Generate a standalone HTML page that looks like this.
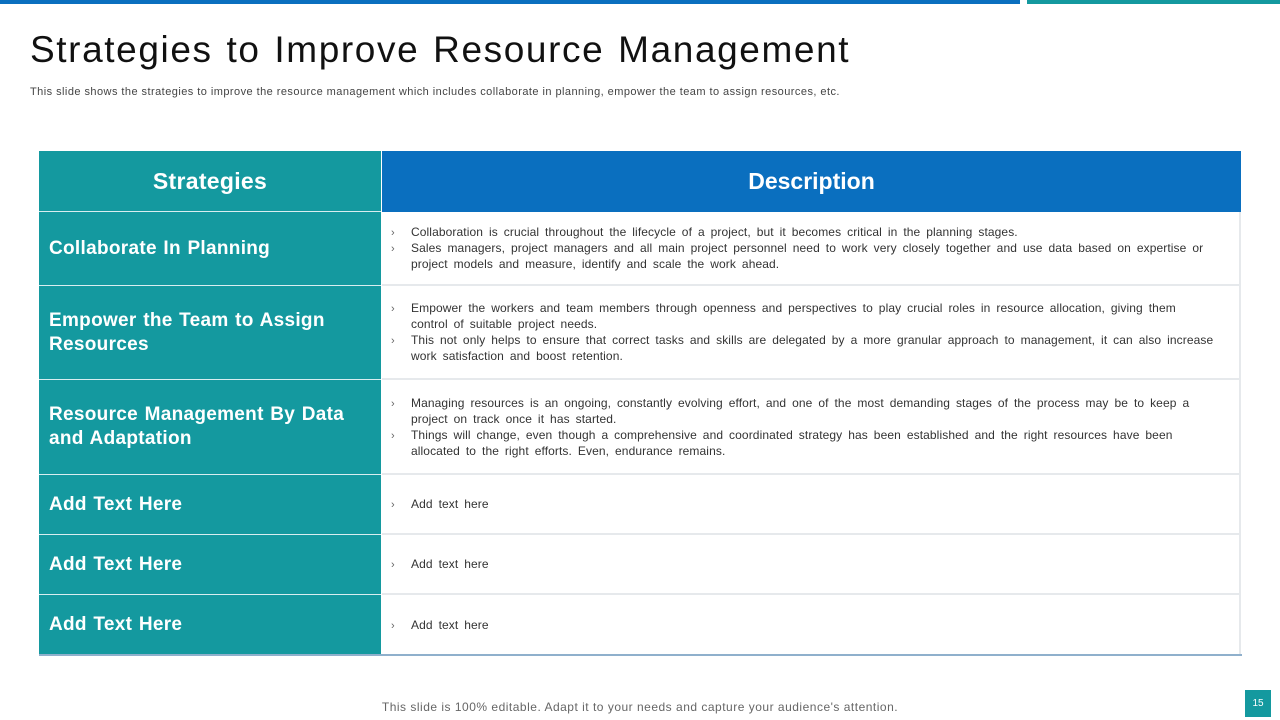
<!DOCTYPE html>
<html><head><meta charset="utf-8"><style>
*{margin:0;padding:0;box-sizing:border-box}
body{width:1280px;height:720px;background:#fff;position:relative;overflow:hidden;font-family:"Liberation Sans",sans-serif}
.a{position:absolute}
.l{position:absolute;left:39px;width:342px;background:#14999f;color:#fff;font-weight:bold;font-size:19px;letter-spacing:0.3px;word-spacing:1px;padding-left:10px;padding-right:20px;display:flex;align-items:center;line-height:24px;border-bottom:1px solid #d8eef0}
.r{position:absolute;left:382px;width:859px;border-bottom:2px solid #e6e9ec;border-right:2px solid #e6e9ec;font-size:12px;color:#333;padding-left:29px;padding-right:22px;display:flex;flex-direction:column;justify-content:center;line-height:16px;word-spacing:2.5px;letter-spacing:0.1px}
.r p{position:relative}
.r p:before{content:"›";position:absolute;left:-20px;color:#666;font-size:11px;top:1px}
</style></head><body>
<div class="a" style="left:0;top:0;width:1020px;height:4px;background:#0a6fbf"></div>
<div class="a" style="left:1027px;top:0;width:253px;height:4px;background:#14999f"></div>
<div class="a" style="left:30px;top:29px;font-size:37px;color:#111;letter-spacing:1.6px;word-spacing:2px">Strategies to Improve Resource Management</div>
<div class="a" style="left:30px;top:86px;font-size:11px;color:#444;letter-spacing:0.45px">This slide shows the strategies to improve the resource management which includes collaborate in planning, empower the team to assign resources, etc.</div>

<div class="l" style="top:151px;height:61px;justify-content:center;padding:0;font-size:23px">Strategies</div>
<div class="a" style="left:382px;top:151px;width:859px;height:61px;background:#0a6fbf;color:#fff;font-weight:bold;font-size:23px;display:flex;align-items:center;justify-content:center">Description</div>

<div class="l" style="top:212px;height:74px">Collaborate In Planning</div>
<div class="r" style="top:212px;height:74px"><p>Collaboration is crucial throughout the lifecycle of a project, but it becomes critical in the planning stages.</p><p>Sales managers, project managers and all main project personnel need to work very closely together and use data based on expertise or project models and measure, identify and scale the work ahead.</p></div>

<div class="l" style="top:286px;height:94px">Empower the Team to Assign Resources</div>
<div class="r" style="top:286px;height:94px"><p>Empower the workers and team members through openness and perspectives to play crucial roles in resource allocation, giving them control of suitable project needs.</p><p>This not only helps to ensure that correct tasks and skills are delegated by a more granular approach to management, it can also increase work satisfaction and boost retention.</p></div>

<div class="l" style="top:380px;height:95px">Resource Management By Data and Adaptation</div>
<div class="r" style="top:380px;height:95px"><p>Managing resources is an ongoing, constantly evolving effort, and one of the most demanding stages of the process may be to keep a project on track once it has started.</p><p>Things will change, even though a comprehensive and coordinated strategy has been established and the right resources have been allocated to the right efforts. Even, endurance remains.</p></div>

<div class="l" style="top:475px;height:60px">Add Text Here</div>
<div class="r" style="top:475px;height:60px"><p>Add text here</p></div>
<div class="l" style="top:535px;height:60px">Add Text Here</div>
<div class="r" style="top:535px;height:60px"><p>Add text here</p></div>
<div class="l" style="top:595px;height:60px;border:none">Add Text Here</div>
<div class="r" style="top:595px;height:60px;border-bottom:none"><p>Add text here</p></div>
<div class="a" style="left:39px;top:654px;width:1203px;height:2px;background:#8fb0cc"></div>

<div class="a" style="left:0;width:1280px;top:700px;text-align:center;font-size:12px;color:#666;letter-spacing:0.5px">This slide is 100% editable. Adapt it to your needs and capture your audience's attention.</div>
<div class="a" style="left:1245px;top:690px;width:26px;height:27px;background:#14999f;color:#fff;font-size:10px;display:flex;align-items:center;justify-content:center">15</div>
</body></html>
